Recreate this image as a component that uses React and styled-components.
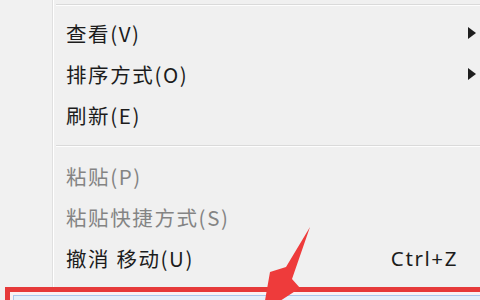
import React from "react";
import styled, { createGlobalStyle } from "styled-components";

const Global = createGlobalStyle`
  html, body { margin: 0; padding: 0; background: #f0f0f0; }
  #root { width: 480px; height: 300px; overflow: hidden; position: relative; }
`;

const Menu = styled.div`
  display: flex;
  align-items: flex-start;
  width: 480px;
  height: 300px;
  overflow: hidden;
  background: #f0f0f0;
  font-family: "Noto Sans CJK SC", "Microsoft YaHei", sans-serif;
  position: relative;
`;

const Gutter = styled.div`
  width: 52px;
  flex: none;
  background: #f1f1f1;
  border-right: 1px solid #e0e0e0;
  box-shadow: 1px 0 0 #ffffff;
  height: 290px;
`;

const Items = styled.div`
  flex: 1;
  display: flex;
  flex-direction: column;
  padding-left: 3px;
`;

const Separator = styled.div`
  flex: none;
  height: 1px;
  background: #dadada;
  border-bottom: 1px solid #fdfdfd;
  margin: ${(p) => p.$m};
`;

const Item = styled.div`
  flex: none;
  height: 41px;
  display: grid;
  grid-template-columns: 1fr auto 22px;
  align-items: center;
  padding-left: 10px;
  font-size: 20.5px;
  letter-spacing: 1.6px;
  color: ${(p) => (p.$disabled ? "#848484" : "#1c1c1c")};
  white-space: nowrap;
`;

const Shortcut = styled.span`
  letter-spacing: 1.6px;
  font-family: "Noto Sans", sans-serif;
  font-size: 20.5px;
`;

const SubArrow = styled.span`
  justify-self: end;
  margin-right: 4px;
  width: 0;
  height: 0;
  border-top: 6px solid transparent;
  border-bottom: 6px solid transparent;
  border-left: 8px solid #1e1e1e;
`;

const RedFrame = styled.div`
  flex: none;
  margin: 9px 0 0 -51px;
  height: 40px;
  border: 5px solid #e63a3a;
  border-right: none;
  padding: 3px 0 0 3px;
  background: #fbf2f4;
`;

const Selected = styled.div`
  height: 30px;
  border: 1px solid #a9c9ee;
  border-right: none;
  background: #e5f0fb;
`;

const Overlay = styled.svg`
  position: absolute;
  left: 0;
  top: 0;
  pointer-events: none;
`;

export default function App() {
  return (
    <>
      <Global />
      <Menu>
        <Gutter />
        <Items>
          <Separator $m="4px 0 6px 0" />
          <Item>
            <span>查看(V)</span>
            <span />
            <SubArrow />
          </Item>
          <Item>
            <span>排序方式(O)</span>
            <span />
            <SubArrow />
          </Item>
          <Item>
            <span>刷新(E)</span>
          </Item>
          <Separator $m="10px 0 8px 0" />
          <Item $disabled>
            <span>粘贴(P)</span>
          </Item>
          <Item $disabled>
            <span>粘贴快捷方式(S)</span>
          </Item>
          <Item>
            <span>撤消 移动(U)</span>
            <Shortcut>Ctrl+Z</Shortcut>
            <span />
          </Item>
          <RedFrame>
            <Selected />
          </RedFrame>
        </Items>
        <Overlay width="480" height="300" viewBox="0 0 480 300">
          <polygon
            points="310,227 286,267 270,272 263,312 300,288 292,279"
            fill="#ee3b3b"
          />
        </Overlay>
      </Menu>
    </>
  );
}
